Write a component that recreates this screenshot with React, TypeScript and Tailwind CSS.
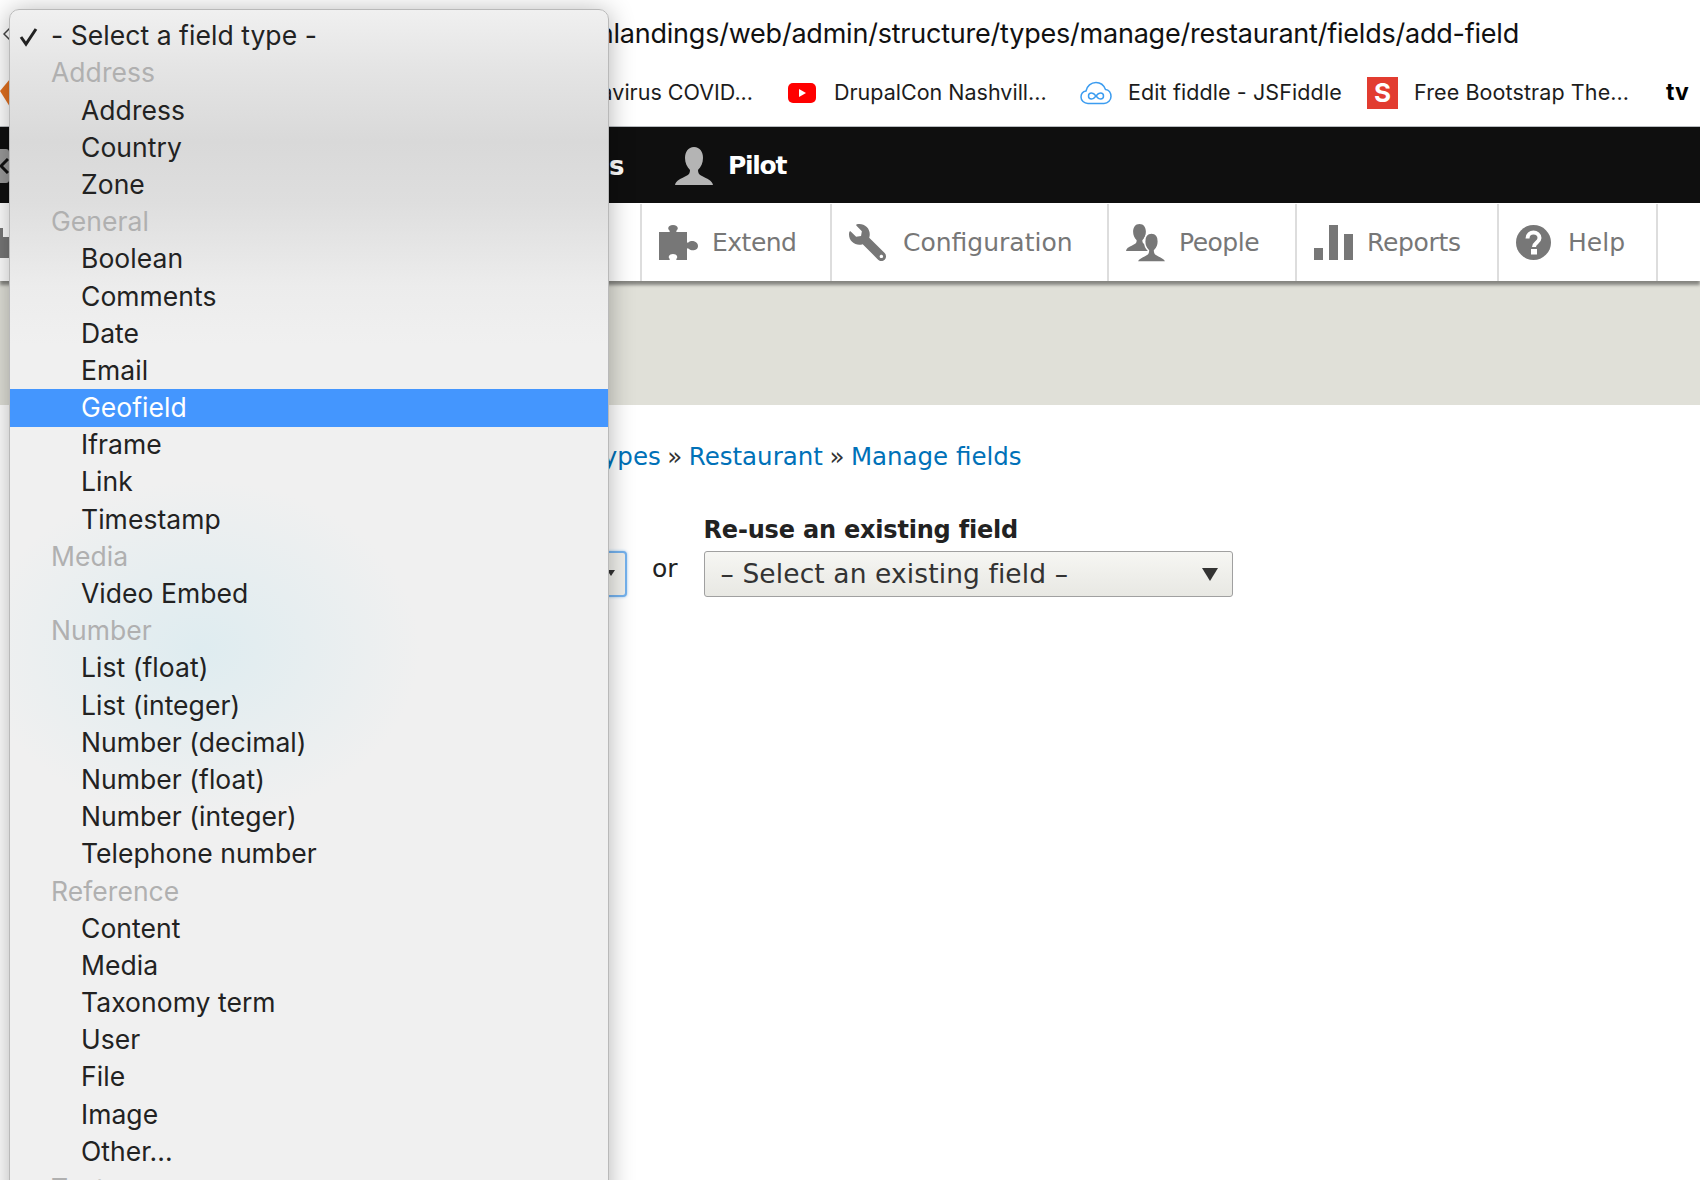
import { FaWrench } from "react-icons/fa";

type Row = { label: string; kind?: "group" | "checked" | "active" };

const rows: Row[] = [
  { label: "- Select a field type -", kind: "checked" },
  { label: "Address", kind: "group" },
  { label: "Address" },
  { label: "Country" },
  { label: "Zone" },
  { label: "General", kind: "group" },
  { label: "Boolean" },
  { label: "Comments" },
  { label: "Date" },
  { label: "Email" },
  { label: "Geofield", kind: "active" },
  { label: "Iframe" },
  { label: "Link" },
  { label: "Timestamp" },
  { label: "Media", kind: "group" },
  { label: "Video Embed" },
  { label: "Number", kind: "group" },
  { label: "List (float)" },
  { label: "List (integer)" },
  { label: "Number (decimal)" },
  { label: "Number (float)" },
  { label: "Number (integer)" },
  { label: "Telephone number" },
  { label: "Reference", kind: "group" },
  { label: "Content" },
  { label: "Media" },
  { label: "Taxonomy term" },
  { label: "User" },
  { label: "File" },
  { label: "Image" },
  { label: "Other..." },
  { label: "Text", kind: "group" },
];

function Person({ className }: { className?: string }) {
  return (
    <svg viewBox="0 0 38 38" className={className} fill="currentColor">
      <path d="M19 0c-6 0-9 5-9 11 0 5 2 9 5 12 0 3-1 5-4 6-5 3-10 4-11 9h38c-1-5-6-6-11-9-3-1-4-3-4-6 3-3 5-7 5-12 0-6-3-11-9-11z" />
    </svg>
  );
}

function Menu() {
  return (
    <div className="absolute left-[9px] top-[9px] h-[1200px] w-[600px] rounded-t-[10px] border border-[#b9b9b9] pt-[7.5px] font-['Inter',sans-serif] text-[26.5px] tracking-[0.05px] text-[#222] shadow-[0_2px_26px_rgba(0,0,0,0.3)] bg-[radial-gradient(ellipse_220px_170px_at_190px_640px,rgba(205,232,240,0.5),transparent),linear-gradient(180deg,#f0f0f0_0%,#e4e4e4_5%,#d9d9d9_11%,#dedede_16%,#ececec_23%,#f0f0f0_28%)]">
      {rows.map((row, i) => (
        <div
          key={i}
          className={
            row.kind === "active"
              ? "flex h-[37.2px] items-center bg-[#4496fe] pl-[71px] text-white"
              : row.kind === "group"
                ? "flex h-[37.2px] items-center pl-[41px] text-[#b0b0b0]"
                : row.kind === "checked"
                  ? "relative flex h-[37.2px] items-center pl-[41px]"
                  : "flex h-[37.2px] items-center pl-[71px]"
          }
        >
          {row.kind === "checked" && (
            <svg viewBox="0 0 20 20" className="absolute left-[9px] top-[9px] size-[20px]" fill="none" stroke="#222" strokeWidth="3">
              <path d="M2 10l5 7L17 2" />
            </svg>
          )}
          {row.label}
        </div>
      ))}
    </div>
  );
}

function Bookmark({ label, className }: { label: string; className: string }) {
  return <span className={className}>{label}</span>;
}

export default function App() {
  return (
    <div className="relative h-[1180px] w-[1700px] overflow-hidden bg-white font-['DejaVu_Sans',sans-serif]">
      <div className="h-[127px] border-b border-[#b8bcc0] font-['Inter',sans-serif] text-[#1c1c1c]">
        <div className="flex h-[68px] w-[1519px] items-center justify-between whitespace-nowrap text-[27px] tracking-[-0.22px] text-[#111]">
          <svg viewBox="0 0 8 14" className="ml-[3px] h-[14px] w-[8px] shrink-0" fill="none" stroke="#444" strokeWidth="1.5">
            <path d="M7 1L1 7l6 6" />
          </svg>
          <span className="shrink-0">localhost/drupal/planlandings/web/admin/structure/types/manage/restaurant/fields/add-field</span>
        </div>
        <div className="flex h-[58px] items-center whitespace-nowrap pb-[9px] text-[21.5px]">
          <svg viewBox="0 0 10 28" className="h-[28px] w-[10px]">
            <path d="M10 0L0 12l10 16z" fill="#e2701f" />
          </svg>
          <Bookmark label="Coronavirus COVID..." className="ml-[520px] w-[223px] text-right" />
          <svg viewBox="0 0 28 20" className="ml-[35px] h-[20px] w-[28px]">
            <rect width="28" height="20" rx="5" fill="#f00" />
            <path d="M11 6l7 4-7 4z" fill="#fff" />
          </svg>
          <Bookmark label="DrupalCon Nashvill..." className="ml-[18px] w-[212px]" />
          <svg viewBox="0 0 32 24" className="ml-[34px] h-[24px] w-[32px]" fill="none" stroke="#3b9cf0" strokeWidth="1.5">
            <path d="M8 22.500c-4 0-7-3-7-6.500 0-3 2-5.500 5-6 1-5 5-8.500 10-8.500s8 3 9.500 7c3.500 0 5.500 3.500 5.500 7s-3 7-7 7z" />
            <path d="M16 15c-1.500-2-3-3-4.500-3s-3 1.200-3 3 1.500 3 3 3 3-1 4.500-3c1.500-2 3-3 4.500-3s3 1.200 3 3-1.500 3-3 3-3-1-4.500-3z" />
          </svg>
          <Bookmark label="Edit fiddle - JSFiddle" className="ml-[16px] w-[214px] tracking-[0.1px]" />
          <span className="ml-[25px] flex h-[32px] w-[31px] items-center justify-center bg-[#e23c30] text-[26px] font-bold text-white">S</span>
          <Bookmark label="Free Bootstrap The..." className="ml-[16px] w-[214px] tracking-[0.1px]" />
          <span className="ml-[38px] text-[23px] font-bold text-black">tv</span>
        </div>
      </div>

      <div className="flex h-[76px] items-center bg-[#0f0f0f] pt-[2px] text-white">
        <span className="flex h-[34px] w-[9px] shrink-0 items-center rounded-r-[3px] bg-[#9a9a9a]">
          <svg viewBox="0 0 9 16" className="h-[16px] w-[9px]" fill="none" stroke="#111" strokeWidth="3">
            <path d="M8 1L1 8l7 7" />
          </svg>
        </span>
        <span className="ml-[600px] w-[13px] text-[26px] font-bold">s</span>
        <Person className="ml-[53px] size-[38px] text-[#b4b4b4]" />
        <span className="ml-[15px] text-[25px] font-bold tracking-[-1.3px]">Pilot</span>
      </div>

      <div className="relative flex h-[78px] items-stretch bg-white pt-[1px] text-[25px] text-[#777] shadow-[0_4px_3px_rgba(0,0,0,0.4)]">
        <div className="flex w-[640px] items-center">
          <svg viewBox="0 0 9 30" className="h-[30px] w-[9px]" fill="#777">
            <path d="M0 0h3v9h6v21H0z" />
          </svg>
        </div>
        <div className="flex w-[190px] items-center gap-[14px] border-l-2 border-[#ddd] pl-[17px]">
          <svg viewBox="0 0 39 35" className="h-[35px] w-[39px]" fill="currentColor">
            <path d="M0 7h10c1 0 1-1 0-2-2-2 0-5 4-5s6 3 4 5c-1 1-1 2 0 2h10v10c0 1 1 1 2 0 2-2 9-1 9 4s-7 5-9 3c-1-1-2-1-2 0v11H18c-1 0-1-1 0-2 1-2-1-4-4-4s-5 2-4 4c1 1 1 2 0 2H0z" />
          </svg>
          <span className="tracking-[-0.5px]">Extend</span>
        </div>
        <div className="flex w-[277px] items-center gap-[17px] border-l-2 border-[#ddd] pl-[17px]">
          <FaWrench className="size-[37px] -scale-x-100" />
          <span>Configuration</span>
        </div>
        <div className="flex w-[188px] items-center gap-[14px] border-l-2 border-[#ddd] pl-[17px]">
          <span className="relative h-[38px] w-[39px]">
            <Person className="absolute left-0 top-0 size-[27px]" />
            <Person className="absolute left-[11px] top-[9px] size-[29px] stroke-white stroke-2" />
          </span>
          <span className="tracking-[-0.5px]">People</span>
        </div>
        <div className="flex w-[202px] items-center gap-[14px] border-l-2 border-[#ddd] pl-[17px]">
          <svg viewBox="0 0 39 35" className="h-[35px] w-[39px]" fill="currentColor">
            <rect x="0" y="23" width="9" height="12" />
            <rect x="15" y="0" width="9" height="35" />
            <rect x="30" y="9" width="9" height="26" />
          </svg>
          <span className="tracking-[-0.3px]">Reports</span>
        </div>
        <div className="flex w-[161px] items-center gap-[17px] border-x-2 border-[#ddd] pl-[17px]">
          <svg viewBox="0 0 35 35" className="size-[35px]">
            <circle cx="17.500" cy="17.500" r="17.500" fill="currentColor" />
            <path d="M11.500 13.500c0-4 3-6 6-6s6 2 6 5.500c0 4.500-5.500 4.500-5.500 9" fill="none" stroke="#fff" strokeWidth="4" />
            <rect x="15" y="24" width="6" height="5.500" fill="#fff" />
          </svg>
          <span>Help</span>
        </div>
      </div>

      <div className="h-[124px] bg-[#e0e0d8]" />

      <div className="mt-[21px] flex h-[52px] items-center gap-[6.5px] whitespace-nowrap pl-[488px] pt-[11px] text-[24.5px] text-[#333]">
        <a className="text-[#0071b8]">Content types</a>
        <span>»</span>
        <a className="text-[#0071b8]">Restaurant</a>
        <span>»</span>
        <a className="text-[#0071b8]">Manage fields</a>
      </div>

      <div className="mt-[34px] flex items-end whitespace-nowrap text-[#222]">
        <div className="ml-[100px] flex h-[46px] w-[527px] justify-end rounded-[4px] border-2 border-[#74b2ee] bg-[#f0f0ec] pr-[10px] pt-[17px] shadow-[0_0_3px_#9cc8f0]">
          <span className="size-0 border-x-[4px] border-t-[6px] border-x-transparent border-t-[#333]" />
        </div>
        <span className="ml-[25px] pb-[10px] text-[25px]">or</span>
        <div className="ml-[26px] flex flex-col">
          <label className="mb-[3px] text-[24px] font-bold tracking-[-0.2px]">Re-use an existing field</label>
          <div className="flex h-[46px] w-[529px] items-center justify-between rounded-[3px] border border-[#a0a0a0] bg-[linear-gradient(180deg,#f6f6f3,#e8e8e3)] pl-[16px] pr-[14px] text-[26.5px] tracking-[0.1px] text-[#333]">
            <span>– Select an existing field –</span>
            <span className="size-0 border-x-[8.5px] border-t-[13px] border-x-transparent border-t-[#333]" />
          </div>
        </div>
      </div>

      <Menu />
    </div>
  );
}
